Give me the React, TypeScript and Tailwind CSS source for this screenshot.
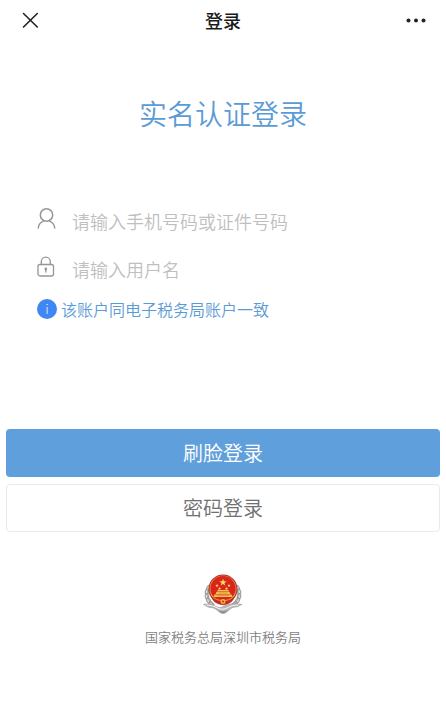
import { useState } from 'react';

const STAR = 'M0-5 1.2-1.6 4.8-1.5 1.9.6 2.9 4 0 2-2.9 4-1.9.6-4.8-1.5-1.2-1.6Z';

const SMALL_STARS = [
  { x: 28, y: 23 },
  { x: 33, y: 29 },
  { x: 47, y: 29 },
  { x: 52, y: 23 },
];

const LEAVES = [
  { x: 11, y: 28, r: 25 },
  { x: 8, y: 36, r: 8 },
  { x: 8, y: 45, r: -12 },
  { x: 11, y: 53, r: -28 },
  { x: 17, y: 60, r: -45 },
];

function Leaves() {
  return (
    <g>
      {LEAVES.map(l => (
        <g key={l.y} transform={`translate(${l.x} ${l.y}) rotate(${l.r})`}>
          <ellipse rx="3.8" ry="6" fill="#b4b4b4" stroke="#777" strokeWidth="1" />
          <path d="M-1-3V3" stroke="#f2f2f2" strokeWidth="1.4" />
        </g>
      ))}
    </g>
  );
}

function Emblem() {
  return (
    <svg viewBox="0 0 80 80" className="size-10" role="img" aria-label="国家税务总局">
      <Leaves />
      <g transform="matrix(-1 0 0 1 80 0)"><Leaves /></g>
      {/* ribbon under the wreath */}
      <path d="M1 61c10-3 18 1 25 4 6 3 9 3 14 0 7-4 16-8 38-4-6 2-8 5-13 5-6 0-9 3-14 7-4 4-7 6-11 6s-7-2-11-6c-5-4-8-6-14-6-5 0-8-3-14-6Z" fill="#b9b9b9" stroke="#888" strokeWidth="1" />
      <path d="M7 62c10 0 18 4 24 7 6 2 11 2 17-1 7-4 13-6 23-6" fill="none" stroke="#f6f6f6" strokeWidth="2" />
      <path d="M27 71c7 4 18 5 26-1l-9 7c-3 2-6 2-8 0Z" fill="#8e8e8e" />
      {/* national emblem */}
      <circle cx="40" cy="30" r="29" fill="#b3342a" />
      <circle cx="40" cy="30" r="27" fill="#e08a3a" />
      <circle cx="40" cy="29" r="25" fill="#d8261c" />
      <path d="M14 38c2 14 12 24 26 24s24-10 26-24c-4 9-13 13-26 13S18 47 14 38Z" fill="#c62b1f" />
      <path d="M16 42c6 8 14 11 24 11s18-3 24-11" fill="none" stroke="#e9a544" strokeWidth="2" />
      <path d="M23 41h34l2 5H21Zm4-5h26l2 4H25Zm3-4h20l3 3H27Z" fill="#f3c351" />
      <path d="M28 43h24M31 38h18" stroke="#c9661e" strokeWidth="1" />
      <path d={STAR} transform="translate(40 17) scale(1.5)" fill="#ffe05c" />
      {SMALL_STARS.map(s => (
        <path key={s.x} d={STAR} transform={`translate(${s.x} ${s.y}) scale(.7)`} fill="#ffe05c" />
      ))}
      <circle cx="40" cy="55" r="5" fill="#eeb04a" />
      <circle cx="40" cy="55" r="2" fill="#c5301f" />
    </svg>
  );
}

function UserIcon() {
  return (
    <svg viewBox="0 0 20 22" className="mb-1 h-[22px] w-5 shrink-0" fill="none" stroke="#969696" strokeWidth="1.5" strokeLinecap="round" aria-hidden="true">
      <circle cx="9.5" cy="7" r="6.2" />
      <path d="M1.2 20c.5-3.400 2.500-5.900 5.200-6.900M12.600 13.100c2.700 1 4.700 3.500 5.200 6.900" />
    </svg>
  );
}

function LockIcon() {
  return (
    <svg viewBox="0 0 20 22" className="mb-1 h-[22px] w-5 shrink-0" fill="none" stroke="#969696" strokeWidth="1.3" strokeLinecap="round" aria-hidden="true">
      <rect x="1" y="8.500" width="15.500" height="11.500" rx="2" />
      <path d="M4.300 8.500V5.700a4.500 4.500 0 0 1 9 0V8.500" />
      <path d="M8.800 13.500V16" />
      <circle cx="8.800" cy="12.900" r=".7" fill="#969696" />
    </svg>
  );
}

export default function App() {
  const [account, setAccount] = useState('');
  const [username, setUsername] = useState('');

  const input = 'h-12 w-full min-w-0 bg-transparent text-lg font-[350] text-[#555] outline-none placeholder:text-[#bfbfbf]';

  return (
    <div className="min-h-screen bg-white font-['Noto_Sans_CJK_SC',sans-serif] font-[350]">
      <header className="grid h-10 grid-cols-3 items-center px-5">
        <button type="button" aria-label="关闭" className="justify-self-start">
          <svg viewBox="0 0 20 20" className="size-5" stroke="#222" strokeWidth="1.6" strokeLinecap="round" aria-hidden="true">
            <path d="M3.500 3.500 17.300 17M17.300 3.500 3.500 17" />
          </svg>
        </button>
        <div className="text-center text-lg font-medium text-[#1a1a1a]">登录</div>
        <button type="button" aria-label="更多" className="justify-self-end">
          <svg viewBox="0 0 20 20" className="size-5" fill="#222" aria-hidden="true">
            <circle cx="2.500" cy="10.500" r="2" />
            <circle cx="10" cy="10.500" r="2" />
            <circle cx="17.500" cy="10.500" r="2" />
          </svg>
        </button>
      </header>

      <h1 className="mt-[53px] text-center text-[28px] leading-10 font-[350] text-[#5a9bd5]">实名认证登录</h1>

      <form onSubmit={e => e.preventDefault()}>
        <div className="mt-16 px-[37px]">
          <label className="flex items-center gap-[15px]">
            <UserIcon />
            <input type="text" value={account} onChange={e => setAccount(e.target.value)} placeholder="请输入手机号码或证件号码" className={input} />
          </label>
          <label className="flex items-center gap-[15px]">
            <LockIcon />
            <input type="text" value={username} onChange={e => setUsername(e.target.value)} placeholder="请输入用户名" className={input} />
          </label>
          <p className="flex h-8 items-center gap-1 text-base text-[#5a9bd5]">
            <span className="flex size-5 items-center justify-center rounded-full bg-[#3f87f5] text-xs font-light text-white">i</span>
            该账户同电子税务局账户一致
          </p>
        </div>

        <div className="mt-26 flex flex-col gap-[7px] px-1.5">
          <button type="submit" className="h-12 rounded-sm bg-[#5f9fdb] text-xl text-white">刷脸登录</button>
          <button type="button" className="h-12 rounded-sm border border-[#e8ebee] bg-white text-xl text-[#707070]">密码登录</button>
        </div>
      </form>

      <footer className="mt-[42px] flex flex-col items-center gap-[13px] pb-8">
        <Emblem />
        <p className="text-[13px] leading-5 text-[#7f7f7f]">国家税务总局深圳市税务局</p>
      </footer>
    </div>
  );
}
